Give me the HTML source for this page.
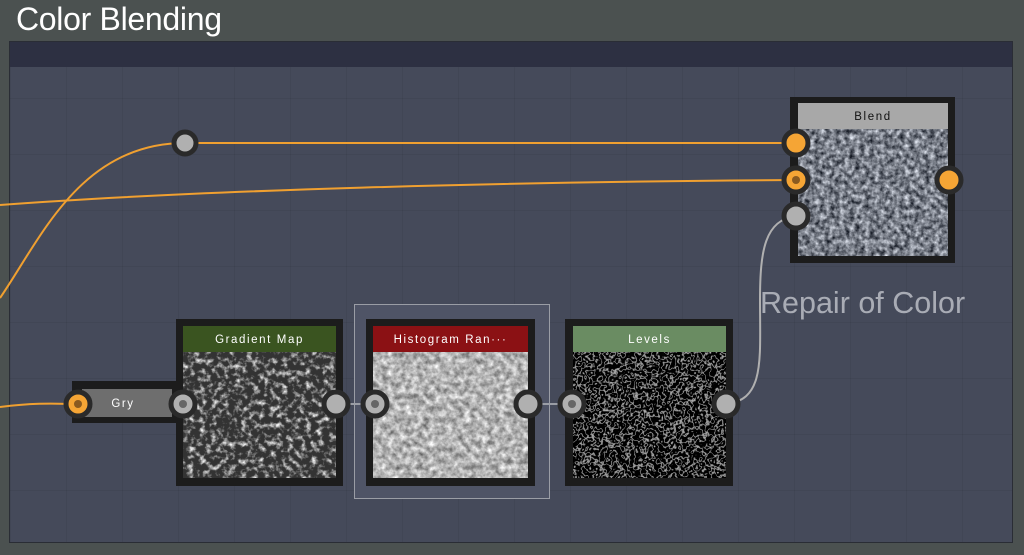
<!DOCTYPE html>
<html><head><style>
body{margin:0;width:1024px;height:555px;overflow:hidden;background:#4b5150;font-family:"Liberation Sans",sans-serif;position:relative}
.abs{position:absolute}
.hdr{position:absolute;color:#fff;font-size:11.5px;letter-spacing:1.6px;text-align:center;line-height:28px}
</style></head><body>
<div class="abs" style="left:16px;top:1px;font-size:32px;color:#fff;letter-spacing:-0.3px">Color Blending</div>
<div class="abs" style="left:9px;top:41px;width:1004px;height:502px;background:#454a5a;border:1px solid #2a2d35;box-sizing:border-box;
background-image:linear-gradient(rgba(0,0,0,.06) 1px,transparent 1px),linear-gradient(90deg,rgba(0,0,0,.06) 1px,transparent 1px);background-size:56px 56px"></div>
<div class="abs" style="left:10px;top:42px;width:1002px;height:25px;background:#2d3042"></div>
<div class="abs" style="left:760px;top:286px;font-size:30.5px;color:#a9acb5">Repair of Color</div>
<div class="abs" style="left:354px;top:304px;width:196px;height:195px;border:1px solid #9a9da5;box-sizing:border-box;background:#4f5466"></div>
<svg class="abs" style="left:0;top:0" width="1024" height="555">
<defs>
<filter id="g" x="0" y="0" width="100%" height="100%" color-interpolation-filters="sRGB"><feTurbulence type="fractalNoise" baseFrequency="0.2" numOctaves="3" seed="3"/><feColorMatrix type="matrix" values="1.1 0 0 0 -0.08  1.1 0 0 0 -0.06  1.1 0 0 0 -0.02  0 0 0 0 1"/></filter>
<filter id="d" x="0" y="0" width="100%" height="100%" color-interpolation-filters="sRGB"><feTurbulence type="fractalNoise" baseFrequency="0.17" numOctaves="3" seed="5"/><feColorMatrix type="matrix" values="2.6 0 0 0 -1.2  2.6 0 0 0 -1.2  2.6 0 0 0 -1.2  0 0 0 0 1"/><feComponentTransfer><feFuncR type="linear" slope="0.75" intercept="0.2"/><feFuncG type="linear" slope="0.75" intercept="0.2"/><feFuncB type="linear" slope="0.75" intercept="0.2"/></feComponentTransfer></filter>
<filter id="h" x="0" y="0" width="100%" height="100%" color-interpolation-filters="sRGB"><feTurbulence type="fractalNoise" baseFrequency="0.17" numOctaves="3" seed="7"/><feColorMatrix type="matrix" values="0.8 0 0 0 0.3  0.8 0 0 0 0.3  0.8 0 0 0 0.3  0 0 0 0 1"/></filter>
<filter id="l" x="0" y="0" width="100%" height="100%" color-interpolation-filters="sRGB"><feTurbulence type="fractalNoise" baseFrequency="0.17" numOctaves="2" seed="9"/><feColorMatrix type="matrix" values="1 0 0 0 0  1 0 0 0 0  1 0 0 0 0  0 0 0 0 1"/><feComponentTransfer><feFuncR type="table" tableValues="0 0 0 .7 0 0 0 .7 0 0 0 .7 0 0"/><feFuncG type="table" tableValues="0 0 0 .7 0 0 0 .7 0 0 0 .7 0 0"/><feFuncB type="table" tableValues="0 0 0 .7 0 0 0 .7 0 0 0 .7 0 0"/></feComponentTransfer></filter>
</defs>
<g fill="none" stroke-width="2">
<path d="M0 298 C40 240 80 143 185 143 L796 143" stroke="#f0a030"/>
<path d="M0 205 C200 190 500 182 796 180" stroke="#f0a030"/>
<path d="M0 407 C40 402 60 404 78 404" stroke="#f0a030"/>
<path d="M336 404 H375 M528 404 H572" stroke="#9a9da5"/>
<path d="M726 404 C765 400 760 360 760 300 C760 250 765 220 796 216" stroke="#b0b0b0"/>
</g>
<rect x="790" y="97" width="165" height="166" fill="#1c1c1c"/>
<rect x="798" y="103" width="150" height="26" fill="#a8a8a8"/>
<rect x="798" y="129" width="150" height="127" filter="url(#g)"/>
<rect x="72" y="381" width="114" height="42" fill="#1c1c1c"/>
<rect x="82" y="389" width="90" height="28" fill="#6e6e6e"/>
<rect x="176" y="319" width="167" height="167" fill="#1c1c1c"/>
<rect x="183" y="326" width="153" height="26" fill="#3a5420"/>
<rect x="183" y="352" width="153" height="126" filter="url(#d)"/>
<rect x="366" y="319" width="169" height="167" fill="#1c1c1c"/>
<rect x="373" y="326" width="155" height="26" fill="#8b1114"/>
<rect x="373" y="352" width="155" height="126" filter="url(#h)"/>
<rect x="565" y="319" width="168" height="167" fill="#1c1c1c"/>
<rect x="573" y="326" width="153" height="26" fill="#6a8c62"/>
<rect x="573" y="352" width="153" height="126" filter="url(#l)"/>
<g stroke="#2a2a2a" stroke-width="5">
<circle cx="185" cy="143" r="11" fill="#b0b0b0"/>
<circle cx="796" cy="143" r="12" fill="#f5a535"/>
<circle cx="796" cy="180" r="12" fill="#f5a535"/>
<circle cx="796" cy="216" r="12" fill="#b0b0b0"/>
<circle cx="949" cy="180" r="12" fill="#f5a535"/>
<circle cx="78" cy="404" r="12" fill="#f5a535"/>
<circle cx="183" cy="404" r="12" fill="#b0b0b0"/>
<circle cx="336" cy="404" r="12" fill="#b0b0b0"/>
<circle cx="375" cy="404" r="12" fill="#b0b0b0"/>
<circle cx="528" cy="404" r="12" fill="#b0b0b0"/>
<circle cx="572" cy="404" r="12" fill="#b0b0b0"/>
<circle cx="726" cy="404" r="12" fill="#b0b0b0"/>
</g>
<g fill="#8a5a20"><circle cx="796" cy="180" r="4"/><circle cx="78" cy="404" r="4"/></g>
<g fill="#666"><circle cx="183" cy="404" r="4"/><circle cx="375" cy="404" r="4"/><circle cx="572" cy="404" r="4"/></g>
</svg>
<div class="hdr" style="left:798px;top:103px;width:150px;color:#111">Blend</div>
<div class="hdr" style="left:82px;top:390px;width:82px">Gry</div>
<div class="hdr" style="left:183px;top:326px;width:153px">Gradient Map</div>
<div class="hdr" style="left:373px;top:326px;width:155px">Histogram Ran···</div>
<div class="hdr" style="left:573px;top:326px;width:153px">Levels</div>
</body></html>
